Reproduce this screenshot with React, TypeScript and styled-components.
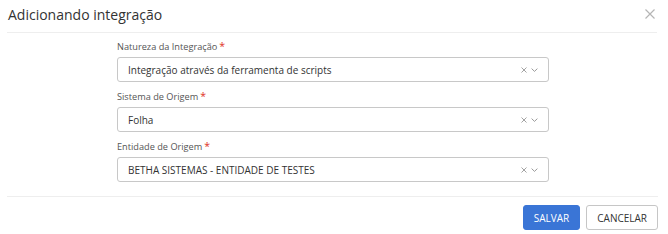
import React from 'react';
import styled, { createGlobalStyle } from 'styled-components';

const GlobalStyle = createGlobalStyle`
  body {
    margin: 0;
    background: #ffffff;
    font-family: "Open Sans", "Noto Sans", Arial, sans-serif;
  }
`;

const Modal = styled.div`
  width: 668px;
  height: 234px;
  box-sizing: border-box;
  padding: 0 11px 0 7px;
  display: flex;
  flex-direction: column;
`;

const Header = styled.div`
  height: 33px;
  flex: none;
  box-sizing: border-box;
  display: flex;
  align-items: center;
  justify-content: space-between;
  border-bottom: 1px solid #eeeeee;
  padding: 0 0 4px 1px;
`;

const Title = styled.h4`
  margin: 0;
  font-size: 14px;
  font-weight: 400;
  color: #333333;
`;

const CloseButton = styled.button`
  border: 0;
  background: none;
  padding: 0;
  margin-right: 1px;
  width: 12px;
  height: 12px;
  display: flex;
  align-items: center;
  justify-content: center;
  cursor: pointer;
`;

const Body = styled.div`
  height: 163px;
  flex: none;
  display: flex;
  justify-content: center;
  padding-top: 7px;
  box-sizing: border-box;
`;

const Form = styled.div`
  width: 432px;
  margin-left: 2px;
  display: flex;
  flex-direction: column;
  gap: 8px;
`;

const Field = styled.div`
  display: flex;
  flex-direction: column;
  gap: 4px;
`;

const Label = styled.label`
  font-size: 9.2px;
  line-height: 13px;
  color: #555555;
`;

const Required = styled.span`
  color: #e0301e;
  margin-left: 2px;
  font-size: 10.5px;
`;

const SelectBox = styled.div`
  height: 25px;
  box-sizing: border-box;
  border: 1px solid #c8c8c8;
  border-radius: 3px;
  display: flex;
  align-items: center;
  padding: 0 10px 0 10px;
  font-size: 10px;
  color: #333333;
`;

const Value = styled.span`
  flex: 1;
`;

const Icons = styled.span`
  display: flex;
  align-items: center;
  gap: 4px;
`;

const Footer = styled.div`
  flex: 1;
  border-top: 1px solid #eeeeee;
  display: flex;
  justify-content: flex-end;
  align-items: flex-start;
  gap: 6px;
  padding-top: 8px;
  margin-right: -1px;
`;

const Button = styled.button<{ $primary?: boolean }>`
  height: 25px;
  box-sizing: border-box;
  padding: 0 10px;
  border-radius: 3px;
  font-family: "Open Sans", "Noto Sans", Arial, sans-serif;
  font-size: 10px;
  border: 1px solid ${(p) => (p.$primary ? '#3a75d6' : '#c6c6c6')};
  background: ${(p) => (p.$primary ? '#3a75d6' : '#ffffff')};
  color: ${(p) => (p.$primary ? '#ffffff' : '#333333')};
  cursor: pointer;
`;

const ClearIcon = () => (
  <svg width="6" height="6" viewBox="0 0 6 6">
    <path d="M0.5 0.5 L5.5 5.5 M5.5 0.5 L0.5 5.5" stroke="#999" strokeWidth="0.9" fill="none" />
  </svg>
);

const ChevronIcon = () => (
  <svg width="7" height="4" viewBox="0 0 7 4">
    <path d="M0.6 0.6 L3.5 3.4 L6.4 0.6" stroke="#999" strokeWidth="1" fill="none" />
  </svg>
);

const fields = [
  { label: 'Natureza da Integração', value: 'Integração através da ferramenta de scripts' },
  { label: 'Sistema de Origem', value: 'Folha' },
  { label: 'Entidade de Origem', value: 'BETHA SISTEMAS - ENTIDADE DE TESTES' },
];

export default function App() {
  return (
    <>
      <GlobalStyle />
      <Modal>
        <Header>
          <Title>Adicionando integração</Title>
          <CloseButton aria-label="Fechar">
            <svg width="10" height="10" viewBox="0 0 10 10">
              <path d="M0.5 0.5 L9.5 9.5 M9.5 0.5 L0.5 9.5" stroke="#b5b5b5" strokeWidth="1.2" fill="none" />
            </svg>
          </CloseButton>
        </Header>
        <Body>
          <Form>
            {fields.map((f) => (
              <Field key={f.label}>
                <Label>
                  {f.label}
                  <Required>*</Required>
                </Label>
                <SelectBox>
                  <Value>{f.value}</Value>
                  <Icons>
                    <ClearIcon />
                    <ChevronIcon />
                  </Icons>
                </SelectBox>
              </Field>
            ))}
          </Form>
        </Body>
        <Footer>
          <Button $primary>SALVAR</Button>
          <Button>CANCELAR</Button>
        </Footer>
      </Modal>
    </>
  );
}
